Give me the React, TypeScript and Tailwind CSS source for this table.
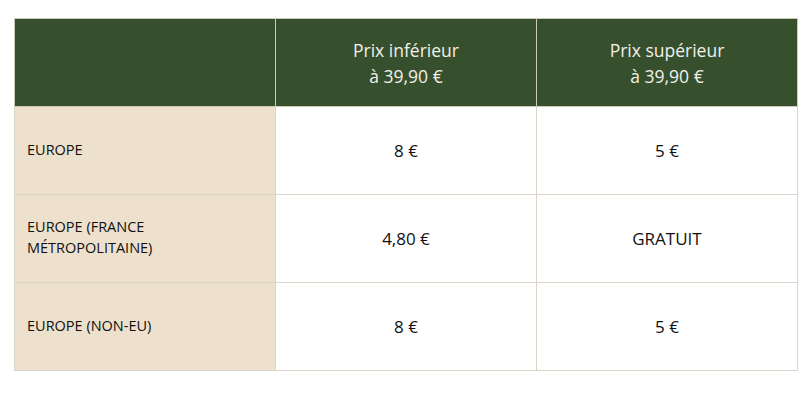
import React from "react";

const rows = [
  { zone: ["EUROPE"], low: "8 €", high: "5 €" },
  { zone: ["EUROPE (FRANCE", "MÉTROPOLITAINE)"], low: "4,80 €", high: "GRATUIT" },
  { zone: ["EUROPE (NON-EU)"], low: "8 €", high: "5 €" },
];

export default function App() {
  return (
    <div
      className="min-h-[400px] bg-white px-[14px] pt-[18px]"
      style={{ fontFamily: '"Open Sans", "Noto Sans", sans-serif' }}
    >
      <table className="w-[784px] table-fixed border-collapse border border-[#dcd5c9]">
        <thead>
          <tr className="h-[88px] bg-[#36502e] text-[#f1efe8]">
            <th className="w-[261px] border border-[#cfc8b8]"></th>
            <th className="border border-[#cfc8b8] text-[17.5px] leading-[26px] font-normal">
              Prix inférieur
              <br />à 39,90 €
            </th>
            <th className="border border-[#cfc8b8] text-[17.5px] leading-[26px] font-normal">
              Prix supérieur
              <br />à 39,90 €
            </th>
          </tr>
        </thead>
        <tbody>
          {rows.map((r, i) => (
            <tr key={i} className="h-[88px] text-[#111111]">
              <td className="bg-[#ede0cc] border border-[#dcd5c9] pl-3 pb-[3px] text-[14.5px] leading-[21px] align-middle">
                {r.zone.map((z) => (
                  <div key={z}>{z}</div>
                ))}
              </td>
              <td className="border border-[#dcd5c9] text-center text-[17px]">{r.low}</td>
              <td className="border border-[#dcd5c9] text-center text-[17px]">{r.high}</td>
            </tr>
          ))}
        </tbody>
      </table>
    </div>
  );
}
